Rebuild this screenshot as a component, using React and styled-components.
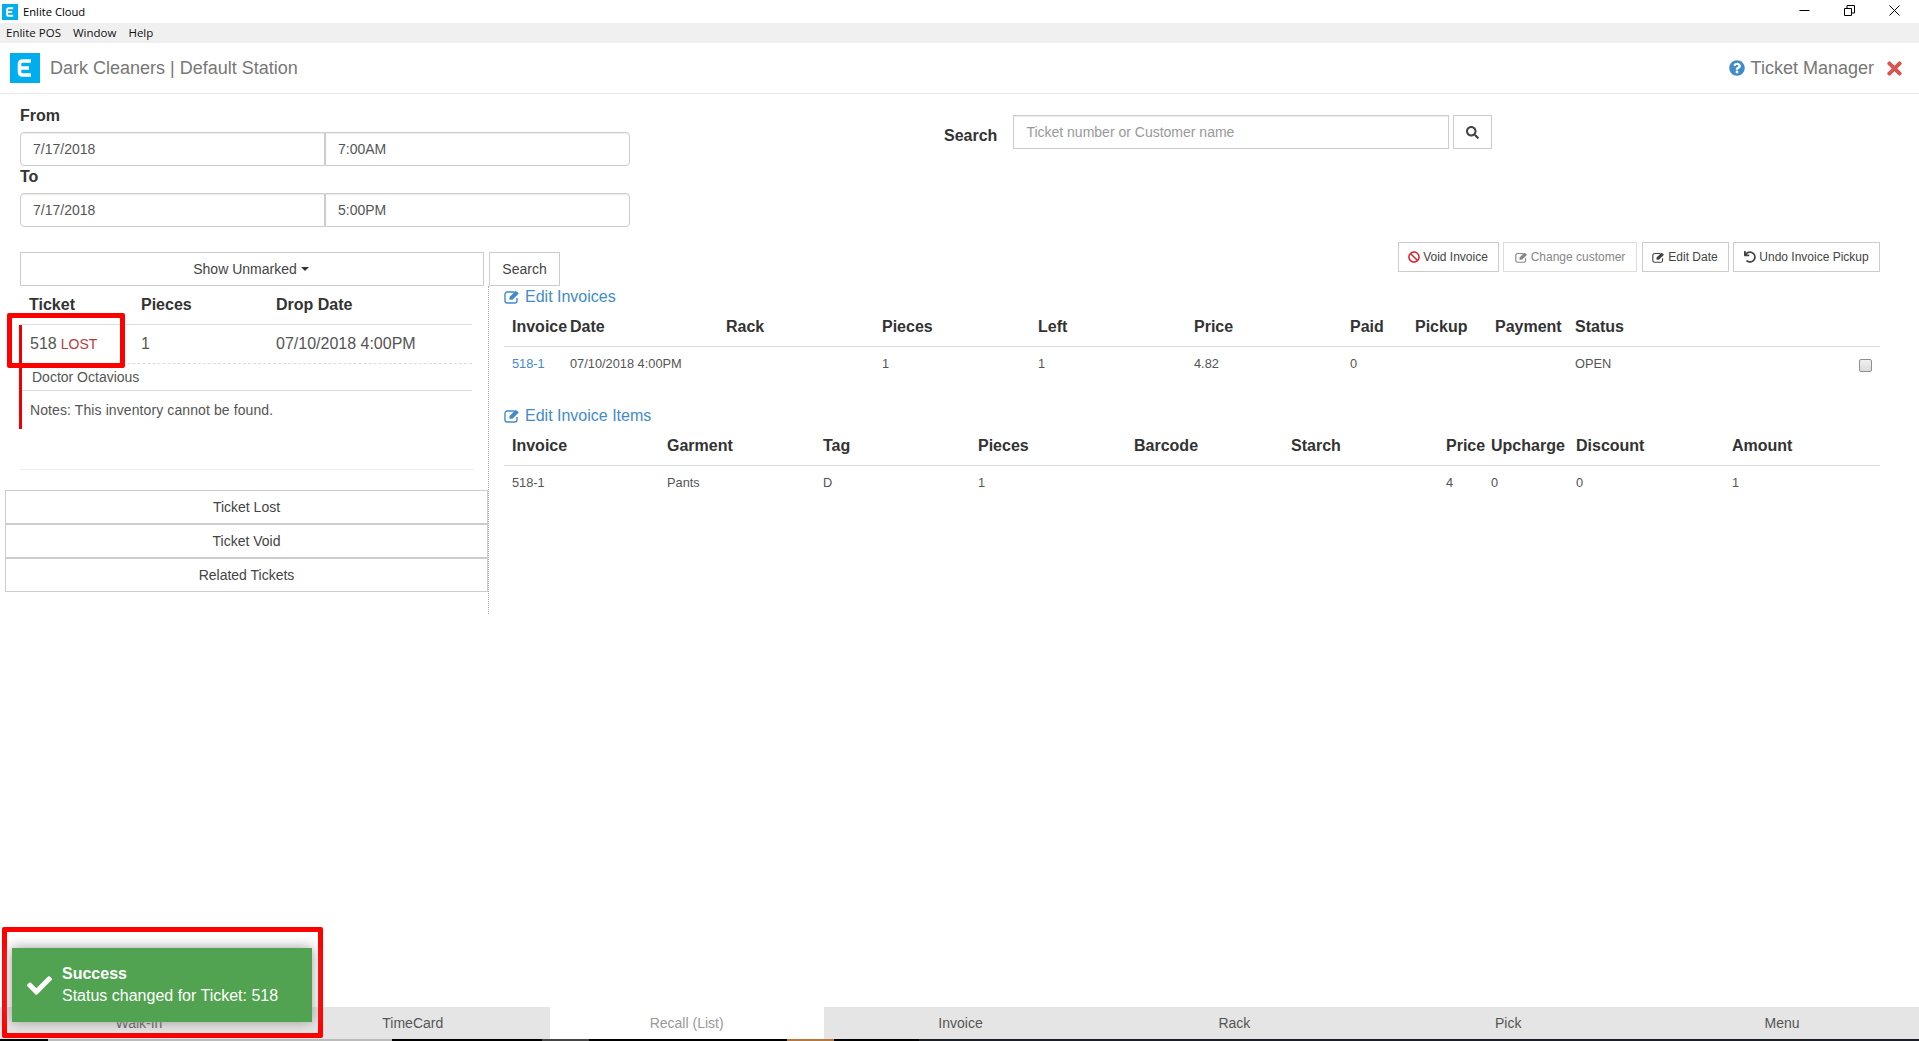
import React from 'react';
import styled, { createGlobalStyle } from 'styled-components';
import { FaBan, FaCheck, FaQuestionCircle, FaSearch, FaTimes, FaUndo } from 'react-icons/fa';

const GlobalStyle = createGlobalStyle`
  * { box-sizing: border-box; }
  html, body { margin: 0; padding: 0; background: #fff; }
  body { font-family: "Liberation Sans", Arial, sans-serif; font-size: 14px; color: #333; overflow: hidden; }
`;

const Page = styled.div`
  position: relative;
  display: flex;
  flex-direction: column;
  height: 100vh;
  overflow: hidden;
`;

/* window chrome */
const TitleBar = styled.div`
  display: flex;
  align-items: center;
  height: 23px;
  padding-left: 2px;
  padding-right: 2px;
  font-family: "Open Sans", "Noto Sans", sans-serif;
  font-size: 11.2px;
  color: #000;
`;
const AppName = styled.span`
  margin-left: 5px;
  flex: 1;
`;
const WinButton = styled.div`
  display: flex;
  align-items: center;
  justify-content: center;
  width: 45px;
  height: 20px;
  margin-bottom: 3px;
`;
const MenuBar = styled.div`
  display: flex;
  align-items: center;
  gap: 12px;
  height: 20px;
  padding: 0 0 1px 6px;
  background: #f0f0f0;
  font-family: "Open Sans", "Noto Sans", sans-serif;
  font-size: 11.5px;
  color: #111;
`;

/* app header */
const Header = styled.header`
  display: flex;
  align-items: center;
  height: 51px;
  padding: 0 14px 0 10px;
  border-bottom: 1px solid #e7e7e7;
  font-size: 18px;
  color: #777;
`;
const Brand = styled.span`
  margin-left: 10px;
  flex: 1;
`;
const ModuleName = styled.span`
  display: flex;
  align-items: center;
  gap: 6px;
  svg { color: #428bca; font-size: 16px; }
`;
const CloseIcon = styled(FaTimes)`
  margin-left: 10px;
  font-size: 21px;
  color: #d9534f;
`;

/* date range + search */
const TopRow = styled.section`
  display: flex;
  height: 148px;
  padding-left: 20px;
`;
const DateForm = styled.div`
  width: 610px;
  padding-top: 11px;
`;
const Label = styled.div`
  height: 20px;
  margin: 1px 0 6px;
  line-height: 20px;
  font-size: 16px;
  font-weight: 700;
`;
const InputGroup = styled.div`
  display: flex;
  height: 34px;
`;
const DateInput = styled.input`
  flex: 1;
  min-width: 0;
  height: 34px;
  padding: 0 12px;
  border: 1px solid #ccc;
  border-radius: ${p => (p.$last ? '0 4px 4px 0' : '4px 0 0 4px')};
  box-shadow: inset 0 1px 1px rgba(0, 0, 0, 0.075);
  font: 14px "Liberation Sans", Arial, sans-serif;
  color: #555;
  background: #fff;
  outline: none;
`;
const SearchGroup = styled.div`
  display: flex;
  align-items: flex-start;
  margin-left: 314px;
  padding-top: 21px;
`;
const SearchLabel = styled.div`
  margin: 11px 16px 0 0;
  line-height: 20px;
  font-size: 16px;
  font-weight: 700;
`;
const SearchInput = styled.input`
  width: 436px;
  height: 34px;
  padding: 0 12px;
  border: 1px solid #ccc;
  box-shadow: inset 0 1px 1px rgba(0, 0, 0, 0.075);
  font: 14px "Liberation Sans", Arial, sans-serif;
  outline: none;
  &::placeholder { color: #999; opacity: 1; }
`;
const Button = styled.button`
  display: inline-flex;
  align-items: center;
  justify-content: center;
  height: 34px;
  padding: 0 12px;
  border: 1px solid #ccc;
  border-radius: 0;
  background: #fff;
  font: 14px "Liberation Sans", Arial, sans-serif;
  color: #444;
`;
const IconButton = styled(Button)`
  width: 39px;
  margin-left: 4px;
  padding: 0;
  font-size: 13px;
`;

/* filter + actions */
const FilterBar = styled.section`
  display: flex;
  justify-content: space-between;
  height: 44px;
  padding: 0 39px 0 20px;
`;
const FilterGroup = styled.div`
  display: flex;
  align-self: flex-end;
  gap: 5px;
`;
const DropdownButton = styled(Button)`
  width: 464px;
  padding-right: 14px;
  gap: 4px;
`;
const Caret = styled.span`
  width: 0;
  height: 0;
  border-top: 4px solid #333;
  border-left: 4px solid transparent;
  border-right: 4px solid transparent;
`;
const FilterSearch = styled(Button)`
  width: 71px;
`;
const Actions = styled.div`
  display: flex;
  align-items: flex-start;
  gap: 4.5px;
`;
const ActionButton = styled(Button)`
  width: ${p => p.$w}px;
  height: 30px;
  padding: 0;
  gap: 3px;
  font-size: 12px;
  opacity: ${p => (p.disabled ? 0.65 : 1)};
  svg { font-size: 12px; color: ${p => p.$iconColor || 'inherit'}; }
`;

/* panels */
const Content = styled.main`
  display: flex;
  align-items: flex-start;
`;
const LeftPanel = styled.div`
  position: relative;
  width: 488px;
  flex: none;
`;
const RightPanel = styled.div`
  flex: 1;
  min-height: 328px;
  padding: 0 39px 0 15px;
  border-left: 1px dotted #aaa;
`;

const TicketHead = styled.div`
  display: grid;
  grid-template-columns: 112px 135px 1fr;
  align-items: end;
  height: 39px;
  margin: 0 16px 0 20px;
  padding: 0 0 10px 9px;
  border-bottom: 1px solid #ddd;
  font-size: 16px;
  font-weight: 700;
`;
const TicketCard = styled.div`
  width: 453px;
  margin-left: 19px;
  border-left: 3px solid #e00;
  font-size: 14px;
  color: #555;
`;
const TicketRow = styled.div`
  display: grid;
  grid-template-columns: 111px 135px 1fr;
  align-items: center;
  height: 39px;
  padding: 0 0 1px 8px;
  border-bottom: 1px dashed #ddd;
  font-size: 16px;
`;
const LostTag = styled.span`
  margin-left: 4px;
  font-size: 14px;
  color: #b5403d;
`;
const CustomerRow = styled.div`
  height: 27px;
  padding-left: 10px;
  line-height: 26px;
  border-bottom: 1px solid #ddd;
`;
const NotesRow = styled.div`
  height: 38px;
  padding-left: 8px;
  line-height: 38px;
  letter-spacing: 0.1px;
`;
const Rule = styled.hr`
  height: 1px;
  margin: 40px 15px 20px 20px;
  border: 0;
  background: #eee;
`;
const ButtonStack = styled.div`
  display: flex;
  flex-direction: column;
  margin-left: 5px;
`;
const WideButton = styled(Button)`
  width: 100%;
`;
const Highlight = styled.div`
  position: absolute;
  top: 27px;
  left: 7px;
  width: 118px;
  height: 55px;
  border: 5px solid #f00;
  border-radius: 2px;
`;

const SectionTitle = styled.div`
  display: flex;
  align-items: center;
  gap: 5px;
  height: 20px;
  padding-top: 2px;
  font-size: 16px;
  color: #428bca;
`;
const DataHead = styled.div`
  display: grid;
  grid-template-columns: ${p => p.$cols};
  align-items: center;
  height: 41px;
  padding: 1px 0 0 8px;
  border-bottom: 1px solid #ddd;
  font-size: 16px;
  font-weight: 700;
`;
const DataRow = styled.div`
  position: relative;
  display: grid;
  grid-template-columns: ${p => p.$cols};
  align-items: center;
  height: 33px;
  margin-bottom: 25px;
  padding-left: 8px;
  font-size: 12.8px;
  color: #555;
`;
const CellLink = styled.span`
  color: #428bca;
`;
const RowCheck = styled.input`
  position: absolute;
  top: 12px;
  right: 8px;
  width: 13px;
  height: 13px;
  margin: 0;
  appearance: none;
  border: 1px solid #8f8f8f;
  border-radius: 2px;
  background: linear-gradient(#efefef, #dcdcdc);
`;

/* bottom tabs */
const TabBar = styled.nav`
  display: grid;
  grid-template-columns: repeat(7, 1fr);
  height: 32px;
  margin-top: auto;
  padding-left: 2px;
  background: #e5e5e5;
`;
const Tab = styled.div`
  display: flex;
  align-items: center;
  justify-content: center;
  font-size: 14px;
  color: ${p => (p.$active ? '#999' : '#555')};
  background: ${p => (p.$active ? '#fff' : 'transparent')};
`;
const Taskbar = styled.div`
  display: flex;
  height: 2px;
  background: #1a1f26;
`;
const TaskSlot = styled.div`
  width: ${p => p.$w}px;
  background: ${p => p.$c};
`;

/* toast */
const ToastFrame = styled.div`
  position: absolute;
  left: 2px;
  bottom: 3px;
  width: 321px;
  height: 111px;
  padding: 16px 0 0 5px;
  border: 5px solid #f00;
  border-radius: 2px;
`;
const Toast = styled.div`
  display: flex;
  align-items: center;
  width: 300px;
  height: 74px;
  padding-left: 15px;
  background: #51a351;
  box-shadow: 0 0 12px #999;
  color: #fff;
  font-size: 16px;
  line-height: 22px;
  svg { font-size: 25px; margin-right: 10px; flex: none; }
`;
const ToastTitle = styled.div`
  font-weight: 700;
`;

const LogoMark = ({ size }) => (
  <svg width={size} height={size} viewBox="0 0 30 30">
    <rect width="30" height="30" fill="#00aeef" />
    <path d="M21 8H12.5Q9.5 8 9.5 11V19Q9.5 22 12.5 22H21M10 15H19" fill="none" stroke="#fff" strokeWidth="3.6" />
  </svg>
);

// pencil-square outline with a solid pencil, drawn because the packages only have the newer shape
const EditIcon = ({ w = 16, h = 14 }) => (
  <svg width={w} height={h} viewBox="0 0 16 14" preserveAspectRatio="none">
    <path d="M10.5 2H3.2A2.2 2.2 0 0 0 1 4.2V10.8A2.2 2.2 0 0 0 3.2 13H10.8A2.2 2.2 0 0 0 13 10.8V8" fill="none" stroke="currentColor" strokeWidth="1.4" />
    <path d="M5.5 7L11.8 0.8 14.8 3.6 8.5 9.8H5.5Z" fill="currentColor" />
  </svg>
);

const invoiceCols = '58px 156px 156px 156px 156px 156px 65px 80px 80px 1fr';
const itemCols = '155px 156px 155px 156px 157px 155px 45px 85px 156px 1fr';
const tabs = ['Walk-In', 'TimeCard', 'Recall (List)', 'Invoice', 'Rack', 'Pick', 'Menu'];
const taskSlots = [[48, '#000'], [344, '#bbb'], [150, '#000'], [47, '#444'], [198, '#000'], [47, '#b5793f'], [85, '#000']];

export default function App() {
  return (
    <Page>
      <GlobalStyle />
      <TitleBar>
        <LogoMark size={16} />
        <AppName>Enlite Cloud</AppName>
        <WinButton>
          <svg width="11" height="11" viewBox="0 0 11 11"><path d="M0.5 5.5H10.5" stroke="#000" fill="none" /></svg>
        </WinButton>
        <WinButton>
          <svg width="11" height="11" viewBox="0 0 11 11"><path d="M0.5 3.5H7.5V10.5H0.5ZM3 3.5V0.5H10.5V8H7.5" stroke="#000" fill="none" /></svg>
        </WinButton>
        <WinButton>
          <svg width="11" height="11" viewBox="0 0 11 11"><path d="M0.5 0.5L10.5 10.5M10.5 0.5L0.5 10.5" stroke="#000" fill="none" /></svg>
        </WinButton>
      </TitleBar>
      <MenuBar>
        <span>Enlite POS</span>
        <span>Window</span>
        <span>Help</span>
      </MenuBar>
      <Header>
        <LogoMark size={30} />
        <Brand>Dark Cleaners | Default Station</Brand>
        <ModuleName><FaQuestionCircle />Ticket Manager</ModuleName>
        <CloseIcon />
      </Header>

      <TopRow>
        <DateForm>
          <Label>From</Label>
          <InputGroup>
            <DateInput readOnly value="7/17/2018" />
            <DateInput readOnly $last value="7:00AM" />
          </InputGroup>
          <Label>To</Label>
          <InputGroup>
            <DateInput readOnly value="7/17/2018" />
            <DateInput readOnly $last value="5:00PM" />
          </InputGroup>
        </DateForm>
        <SearchGroup>
          <SearchLabel>Search</SearchLabel>
          <SearchInput placeholder="Ticket number or Customer name" />
          <IconButton><FaSearch /></IconButton>
        </SearchGroup>
      </TopRow>

      <FilterBar>
        <FilterGroup>
          <DropdownButton>Show Unmarked <Caret /></DropdownButton>
          <FilterSearch>Search</FilterSearch>
        </FilterGroup>
        <Actions>
          <ActionButton $w={101} $iconColor="#d9232e"><FaBan />Void Invoice</ActionButton>
          <ActionButton $w={134} disabled><EditIcon w={13} h={11} />Change customer</ActionButton>
          <ActionButton $w={87}><EditIcon w={13} h={11} />Edit Date</ActionButton>
          <ActionButton $w={147}><FaUndo />Undo Invoice Pickup</ActionButton>
        </Actions>
      </FilterBar>

      <Content>
        <LeftPanel>
          <TicketHead>
            <span>Ticket</span>
            <span>Pieces</span>
            <span>Drop Date</span>
          </TicketHead>
          <TicketCard>
            <TicketRow>
              <span>518<LostTag>LOST</LostTag></span>
              <span>1</span>
              <span>07/10/2018 4:00PM</span>
            </TicketRow>
            <CustomerRow>Doctor Octavious</CustomerRow>
            <NotesRow>Notes: This inventory cannot be found.</NotesRow>
          </TicketCard>
          <Rule />
          <ButtonStack>
            <WideButton>Ticket Lost</WideButton>
            <WideButton>Ticket Void</WideButton>
            <WideButton>Related Tickets</WideButton>
          </ButtonStack>
          <Highlight />
        </LeftPanel>

        <RightPanel>
          <SectionTitle><EditIcon />Edit Invoices</SectionTitle>
          <DataHead $cols={invoiceCols}>
            {['Invoice', 'Date', 'Rack', 'Pieces', 'Left', 'Price', 'Paid', 'Pickup', 'Payment', 'Status'].map(h => <span key={h}>{h}</span>)}
          </DataHead>
          <DataRow $cols={invoiceCols}>
            <CellLink>518-1</CellLink>
            <span>07/10/2018 4:00PM</span>
            <span />
            <span>1</span>
            <span>1</span>
            <span>4.82</span>
            <span>0</span>
            <span />
            <span />
            <span>OPEN</span>
            <RowCheck type="checkbox" />
          </DataRow>

          <SectionTitle><EditIcon />Edit Invoice Items</SectionTitle>
          <DataHead $cols={itemCols}>
            {['Invoice', 'Garment', 'Tag', 'Pieces', 'Barcode', 'Starch', 'Price', 'Upcharge', 'Discount', 'Amount'].map(h => <span key={h}>{h}</span>)}
          </DataHead>
          <DataRow $cols={itemCols}>
            <span>518-1</span>
            <span>Pants</span>
            <span>D</span>
            <span>1</span>
            <span />
            <span />
            <span>4</span>
            <span>0</span>
            <span>0</span>
            <span>1</span>
          </DataRow>
        </RightPanel>
      </Content>

      <TabBar>
        {tabs.map(t => <Tab key={t} $active={t === 'Recall (List)'}>{t}</Tab>)}
      </TabBar>
      <Taskbar>
        {taskSlots.map(([w, c], i) => <TaskSlot key={i} $w={w} $c={c} />)}
      </Taskbar>

      <ToastFrame>
        <Toast>
          <FaCheck />
          <div>
            <ToastTitle>Success</ToastTitle>
            <div>Status changed for Ticket: 518</div>
          </div>
        </Toast>
      </ToastFrame>
    </Page>
  );
}
